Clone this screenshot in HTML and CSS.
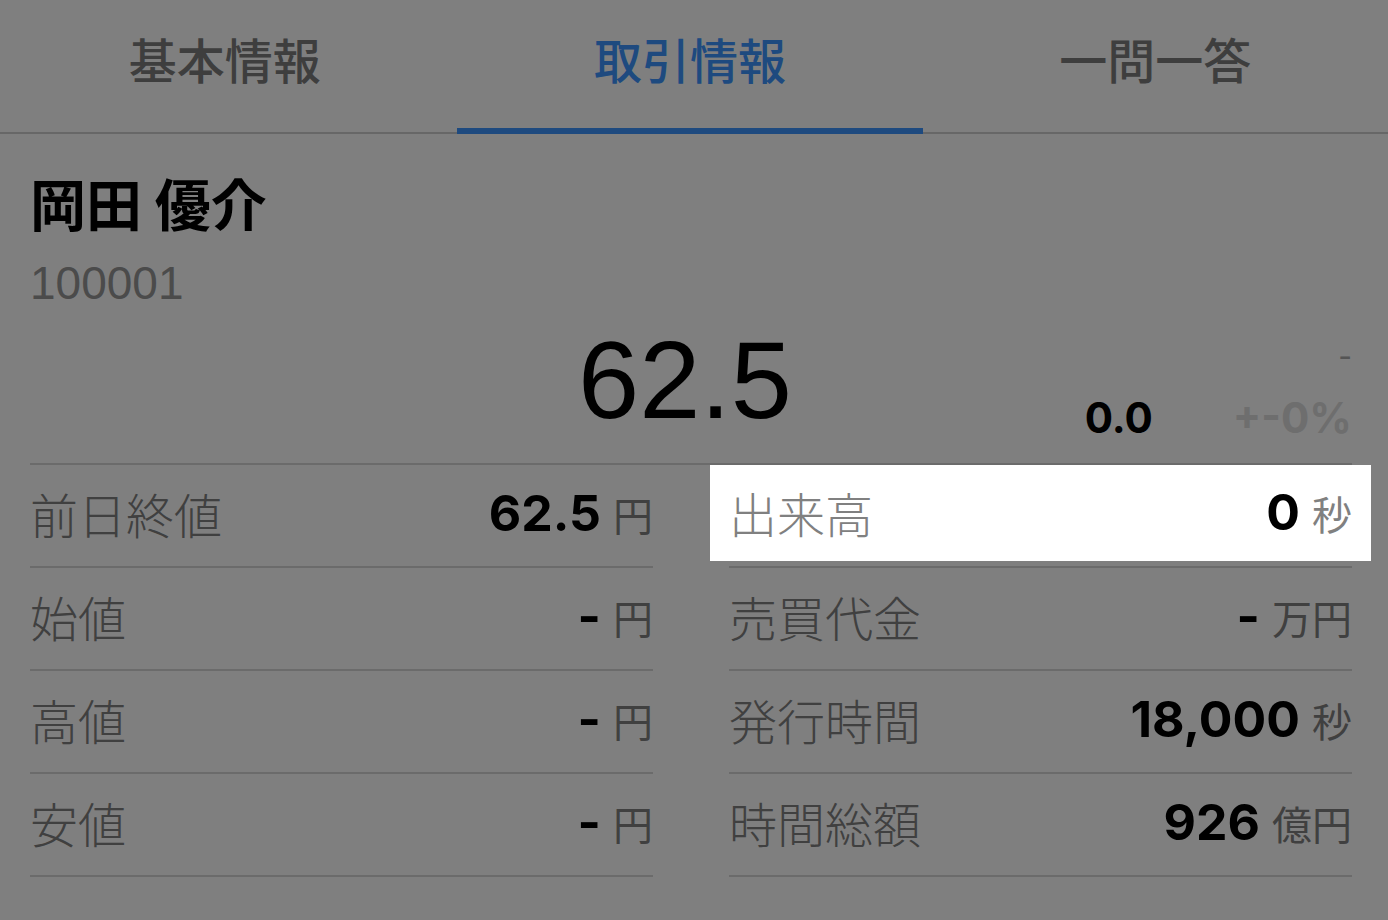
FILE: index.html
```html
<!DOCTYPE html>
<html>
  <head>
    <title>取引情報</title>
    <link rel="stylesheet" href="styles.css">
  </head>
  <body>

    <div class="tabs">
      <div class="tab">基本情報</div>
      <div class="tab active">取引情報</div>
      <div class="tab">一問一答</div>
    </div>

    <div class="content">
      <h1 class="name">岡田 優介</h1>
      <div class="code">100001</div>

      <div class="quote">
        <div></div>
        <div class="price">62.5</div>
        <div class="change">
          <div class="time">-</div>
          <div class="diff">
            <span class="diff-val">0.0</span>
            <span class="diff-pct">+-0%</span>
          </div>
        </div>
      </div>

      <div class="table">
        <div class="col">
          <div class="row"><span class="label">前日終値</span><span class="value">62.5<small>円</small></span></div>
          <div class="row"><span class="label">始値</span><span class="value">-<small>円</small></span></div>
          <div class="row"><span class="label">高値</span><span class="value">-<small>円</small></span></div>
          <div class="row"><span class="label">安値</span><span class="value">-<small>円</small></span></div>
        </div>
        <div class="col">
          <div class="row">
            <div class="spot"><span class="label">出来高</span><span class="value">0<small>秒</small></span></div>
          </div>
          <div class="row"><span class="label">売買代金</span><span class="value">-<small>万円</small></span></div>
          <div class="row"><span class="label">発行時間</span><span class="value">18,000<small>秒</small></span></div>
          <div class="row"><span class="label">時間総額</span><span class="value">926<small>億円</small></span></div>
        </div>
      </div>
    </div>

  </body>
</html>
```

FILE: styles.css
```css
html, body {
  min-height: 100%;
}
body {
  margin: 0;
  min-height: 920px;
  overflow: hidden;
  background-color: #fff;
  font-family: "Noto Sans CJK JP", "Liberation Sans", sans-serif;
  color: #000;
}

/* tabs */
.tabs {
  display: grid;
  grid-template-columns: 1fr 1fr 1fr;
  margin-left: -8px;
  border-bottom: 2px solid #cecece;
}
.tab {
  height: 132px;
  box-sizing: border-box;
  padding-bottom: 16px;
  display: flex;
  align-items: center;
  justify-content: center;
  font-size: 48px;
  font-weight: 500;
  color: #7c7c7c;
}
.tab.active {
  color: #3c94ff;
  box-shadow: 0 2px 0 #3c94ff, inset 0 -4px 0 #3c94ff;
}

.content {
  padding: 0 36px 0 30px;
}

/* stock header */
.name {
  margin: 32px 0 0;
  font-size: 56px;
  font-weight: 700;
  line-height: 72px;
}
.code {
  margin-top: 19px;
  font-family: "Liberation Sans", sans-serif;
  font-size: 46px;
  line-height: 52px;
  color: #969696;
}
.quote {
  display: grid;
  grid-template-columns: 1fr auto 1fr;
  align-items: end;
  height: 154px;
}
.price {
  font-family: "Liberation Sans", sans-serif;
  font-size: 110px;
  line-height: 106px;
  margin: 0 12px 30px 0;
}
.change {
  font-family: Inter, sans-serif;
  font-weight: 700;
  text-align: right;
  margin-bottom: 20px;
}
.time {
  font-size: 30px;
  font-weight: 400;
  color: #aaa;
  line-height: 30px;
  margin-bottom: 22px;
}
.diff {
  display: flex;
  justify-content: flex-end;
  gap: 80px;
  font-size: 42px;
  line-height: 50px;
}
.diff-pct {
  color: #dcdcdc;
}

/* table */
.table {
  display: grid;
  grid-template-columns: 1fr 1fr;
  column-gap: 76px;
  border-top: 2px solid #d6d6d6;
}
.row {
  display: flex;
  align-items: center;
  justify-content: space-between;
  height: 101px;
  border-bottom: 2px solid #d6d6d6;
}
.label {
  font-size: 48px;
  font-weight: 300;
  color: #808080;
  margin-bottom: 6px;
}
.value {
  font-family: Inter, sans-serif;
  font-size: 50px;
  font-weight: 700;
  margin-bottom: 6px;
}
.value small {
  font-family: "Noto Sans CJK JP", sans-serif;
  font-size: 40px;
  font-weight: 400;
  color: #808080;
  margin-left: 12px;
}

/* tutorial spotlight */
.spot {
  position: relative;
  z-index: 2;
  flex: 1;
  align-self: stretch;
  display: flex;
  align-items: center;
  justify-content: space-between;
  margin: 0 -19px 5px;
  padding: 0 19px 2px;
  background-color: #fff;
  box-shadow: 0 0 0 3000px rgba(0, 0, 0, 0.5);
}
.spot .label,
.spot .value {
  margin-bottom: 0;
}
```
